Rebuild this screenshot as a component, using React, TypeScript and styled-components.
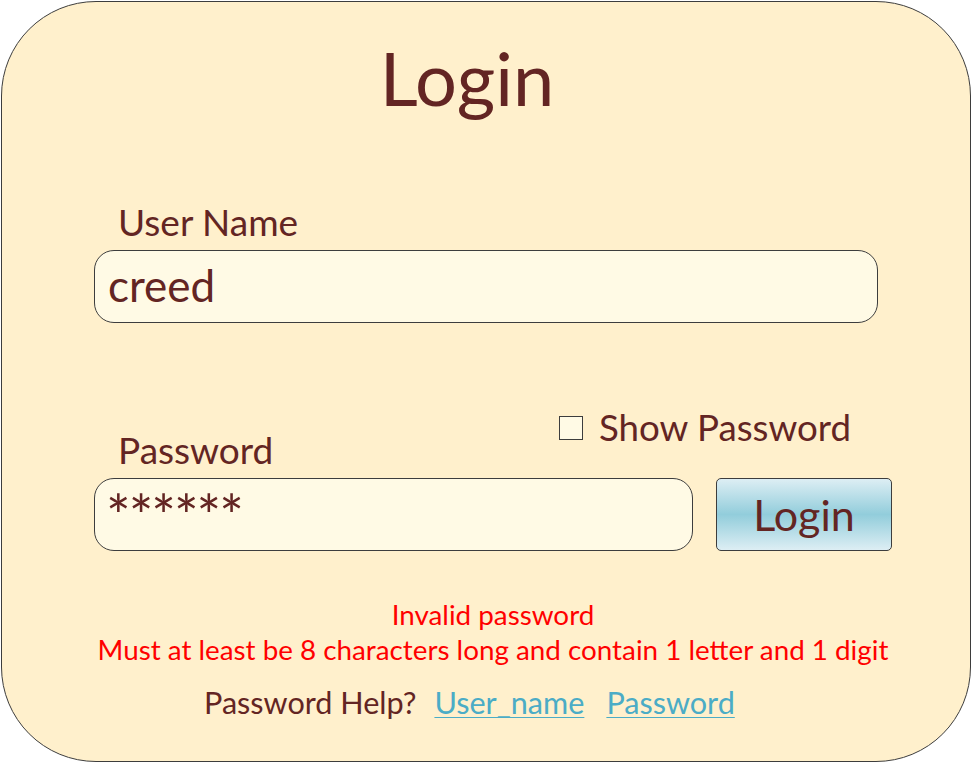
import styled, { createGlobalStyle } from "styled-components";

const GlobalStyle = createGlobalStyle`
  html, body {
    margin: 0;
    padding: 0;
    background: #ffffff;
  }
  body {
    font-family: Lato, "Liberation Sans", sans-serif;
  }
`;

const Panel = styled.div`
  box-sizing: border-box;
  width: 970px;
  height: 761px;
  margin: 1px 0 0 1px;
  padding: 39px 0 0 92px;
  background: #fff0cc;
  border: 1px solid #3d3d3d;
  border-radius: 95px;
  color: #632523;
`;

const Form = styled.div`
  display: flex;
  flex-direction: column;
  width: 798px;
`;

const Title = styled.h1`
  margin: 0;
  padding-right: 52px;
  font-size: 74px;
  font-weight: 400;
  line-height: 1;
  text-align: center;
`;

const Label = styled.div<{ $top?: number }>`
  margin-top: ${(p) => p.$top ?? 0}px;
  padding-left: 24px;
  font-size: 37px;
  line-height: 1;
`;

const Field = styled.div<{ $width: number; $padTop: number; $padLeft: number }>`
  box-sizing: border-box;
  width: ${(p) => p.$width}px;
  height: 73px;
  padding: ${(p) => p.$padTop}px 13px 0 ${(p) => p.$padLeft}px;
  background: #fffae5;
  border: 1px solid #3d3d3d;
  border-radius: 20px;
  font-size: 44px;
  line-height: 1;
`;

const Stars = styled.span`
  letter-spacing: -2px;
  font-size: 58px;
`;

const LabelRow = styled.div`
  display: grid;
  grid-template-columns: 465px auto;
  align-items: start;
  margin-top: 86px;
  height: 58px;
`;

const CheckLine = styled.label`
  display: flex;
  align-items: center;
  gap: 16px;
  font-size: 36.7px;
  line-height: 1;
`;

const Box = styled.span`
  box-sizing: border-box;
  width: 24px;
  height: 24px;
  margin-top: 2px;
  background: #fffae5;
  border: 1px solid #3d3d3d;
`;

const PasswordRow = styled.div`
  display: flex;
  gap: 23px;
  margin-top: 11px;
`;

const LoginButton = styled.button`
  box-sizing: border-box;
  width: 176px;
  height: 73px;
  padding: 0;
  border: 1px solid #3d3d3d;
  border-radius: 5px;
  background: linear-gradient(#ddeef4 0%, #92cddb 50%, #ddeef4 100%);
  color: #632523;
  font-family: Lato, "Liberation Sans", sans-serif;
  font-size: 43px;
  line-height: 1;
`;

const ErrorText = styled.div`
  margin-top: 46px;
  color: #ff0000;
  font-size: 27.8px;
  line-height: 35px;
  text-align: center;
`;

const Help = styled.div`
  display: flex;
  margin-top: 21px;
  padding-left: 110px;
  font-size: 30.6px;
  line-height: 1;
`;

const HelpLink = styled.a<{ $gap: number }>`
  margin-left: ${(p) => p.$gap}px;
  color: #4bacc6;
  text-decoration: underline;
  text-underline-offset: 3px;
  text-decoration-thickness: 1px;
`;

export default function App() {
  return (
    <>
      <GlobalStyle />
      <Panel>
        <Form>
          <Title>Login</Title>
          <Label $top={88}>User Name</Label>
          <Field $width={784} $padTop={12} $padLeft={13} style={{ marginTop: 10 }}>
            creed
          </Field>
          <LabelRow>
            <Label style={{ marginTop: 22 }}>Password</Label>
            <CheckLine>
              <Box />
              Show Password
            </CheckLine>
          </LabelRow>
          <PasswordRow>
            <Field $width={599} $padTop={7} $padLeft={11}>
              <Stars>******</Stars>
            </Field>
            <LoginButton>Login</LoginButton>
          </PasswordRow>
          <ErrorText>
            Invalid password
            <br />
            Must at least be 8 characters long and contain 1 letter and 1 digit
          </ErrorText>
          <Help>
            <span>Password Help?</span>
            <HelpLink href="#" $gap={18}>
              User_name
            </HelpLink>
            <HelpLink href="#" $gap={22}>
              Password
            </HelpLink>
          </Help>
        </Form>
      </Panel>
    </>
  );
}
